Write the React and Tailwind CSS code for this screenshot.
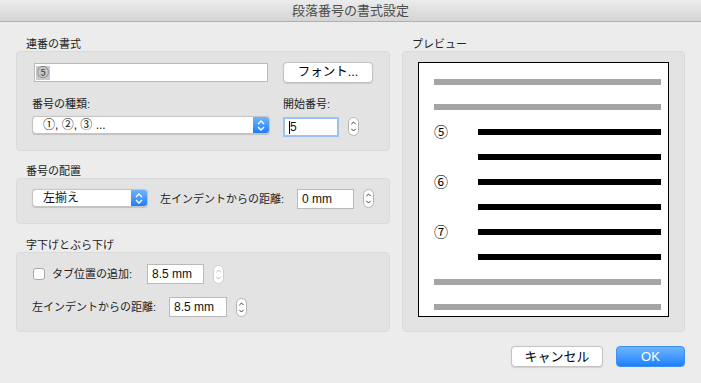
import React from "react";

function Stepper({ disabled }) {
  const c = disabled ? "#b9b9b9" : "#3c3c3c";
  return (
    <svg width="11" height="19" viewBox="0 0 11 19" className="shrink-0">
      <rect x="0.5" y="0.5" width="10" height="18" rx="5" fill="#ffffff" stroke={disabled ? "#cfcfcf" : "#b3b3b3"} />
      <path d="M3.3 7.2 L5.5 5 L7.7 7.2" stroke={c} fill="none" strokeWidth="1" />
      <path d="M3.3 11.8 L5.5 14 L7.7 11.8" stroke={c} fill="none" strokeWidth="1" />
    </svg>
  );
}

function BlueArrows() {
  return (
    <div className="w-[16px] h-full flex items-center justify-center bg-gradient-to-b from-[#6db4fb] to-[#1a7ff7] rounded-r-[3px]">
      <svg width="10" height="13" viewBox="0 0 10 13">
        <path d="M2 5 L5 2 L8 5" stroke="#ffffff" fill="none" strokeWidth="1.4" />
        <path d="M2 8 L5 11 L8 8" stroke="#ffffff" fill="none" strokeWidth="1.4" />
      </svg>
    </div>
  );
}

function Select({ width, height, children }) {
  return (
    <div
      className="flex items-stretch bg-white rounded-[4px] border border-[#c4c4c4] shadow-[0_0.5px_1px_rgba(0,0,0,0.15)] shrink-0"
      style={{ width, height }}
    >
      <div className="flex-1 flex items-center pl-[10px] text-[12px] text-[#111] leading-none">{children}</div>
      <BlueArrows />
    </div>
  );
}

function Field({ width, children, focus }) {
  return (
    <div
      className={
        "h-[20px] bg-white flex items-center pl-[4px] text-[12px] text-[#111] leading-none shrink-0 " +
        (focus ? "border-2 border-[#9dc1f0]" : "border border-[#b9b9b9]")
      }
      style={{ width }}
    >
      {children}
    </div>
  );
}

function Header({ children }) {
  return <div className="h-[14px] pl-[10px] text-[11px] leading-[14px] text-[#222]">{children}</div>;
}

function Line({ gray }) {
  return <div className={"h-[6px] flex-1 " + (gray ? "bg-[#a5a5a5]" : "bg-black")} />;
}

function NumRow({ n }) {
  return (
    <div className="h-[6px] flex items-center">
      <div className="w-[44px] text-[14px] leading-none text-black">{n}</div>
      <Line />
    </div>
  );
}

export default function App() {
  return (
    <div className="w-[701px] h-[383px] bg-[#ececec] flex flex-col font-['Liberation_Sans','Noto_Sans_CJK_JP',sans-serif] text-[#222] overflow-hidden">
      <div className="h-[22px] shrink-0 bg-gradient-to-b from-[#ececec] to-[#d4d4d4] border-b border-[#b0b0b0] flex items-center justify-center text-[13px] text-[#4c4c4c]">
        段落番号の書式設定
      </div>

      <div className="flex px-[16px] pt-[15px] gap-[12px]">
        {/* left column */}
        <div className="w-[374px] flex flex-col">
          <Header>連番の書式</Header>
          <div className="h-[100px] bg-[#e3e3e3] border border-[#dadada] rounded-[4px] pl-[15px] pt-[10px] flex flex-col">
            <div className="flex items-center h-[21px]">
              <div className="ml-[2px] w-[234px] h-[19px] bg-white border border-[#b9b9b9] flex items-center pl-[1px]">
                <span className="bg-[#c9c9c9] text-[12px] leading-[14px] px-[1px] text-[#444]">⑤</span>
              </div>
              <div className="ml-[15px] w-[90px] h-[21px] bg-white border border-[#c3c3c3] rounded-[4px] shadow-[0_0.5px_1px_rgba(0,0,0,0.12)] flex items-center justify-center text-[12.5px] text-black">
                フォント...
              </div>
            </div>
            <div className="flex mt-[14px] h-[14px] text-[11px] leading-[14px]">
              <div className="w-[251px]">番号の種類:</div>
              <div>開始番号:</div>
            </div>
            <div className="flex items-start mt-[5px]">
              <Select width={238} height={18}>①, ②, ③ ...</Select>
              <div className="ml-[13px] mt-[1px]">
                <Field width={56} focus>
                  <span className="w-[1px] h-[13px] bg-black" />
                  <span>5</span>
                </Field>
              </div>
              <div className="ml-[9px] mt-[1px]">
                <Stepper />
              </div>
            </div>
          </div>

          <div className="mt-[13px]">
            <Header>番号の配置</Header>
          </div>
          <div className="h-[46px] bg-[#e3e3e3] border border-[#dadada] rounded-[4px] pl-[15px] pt-[10px] flex items-start">
            <Select width={116} height={18}>左揃え</Select>
            <div className="ml-[12px] w-[137px] h-[20px] flex items-center text-[11px]">左インデントからの距離:</div>
            <Field width={57}>0 mm</Field>
            <div className="ml-[9px]">
              <Stepper />
            </div>
          </div>

          <div className="mt-[14px]">
            <Header>字下げとぶら下げ</Header>
          </div>
          <div className="h-[80px] bg-[#e3e3e3] border border-[#dadada] rounded-[4px] pl-[15px] pt-[11px] flex flex-col">
            <div className="flex items-center h-[20px]">
              <div className="ml-[1px] w-[12px] h-[12px] bg-white border border-[#a9a9a9] rounded-[3px]" />
              <div className="ml-[7px] w-[95px] text-[11px]">タブ位置の追加:</div>
              <Field width={57}>8.5 mm</Field>
              <div className="ml-[9px]">
                <Stepper disabled />
              </div>
            </div>
            <div className="flex items-center h-[20px] mt-[13px]">
              <div className="w-[137px] text-[11px]">左インデントからの距離:</div>
              <Field width={58}>8.5 mm</Field>
              <div className="ml-[9px]">
                <Stepper />
              </div>
            </div>
          </div>
        </div>

        {/* right column */}
        <div className="w-[283px] flex flex-col">
          <Header>プレビュー</Header>
          <div className="h-[281px] bg-[#e3e3e3] border border-[#dadada] rounded-[4px] pl-[15px] pt-[10px]">
            <div className="w-[251px] h-[255px] bg-white border border-black flex flex-col gap-[19px] pt-[16px] pl-[15px] pr-[7px]">
              <div className="h-[6px] flex"><Line gray /></div>
              <div className="h-[6px] flex"><Line gray /></div>
              <NumRow n="⑤" />
              <NumRow n="" />
              <NumRow n="⑥" />
              <NumRow n="" />
              <NumRow n="⑦" />
              <NumRow n="" />
              <div className="h-[6px] flex"><Line gray /></div>
              <div className="h-[6px] flex"><Line gray /></div>
            </div>
          </div>
        </div>
      </div>

      <div className="flex justify-end gap-[13px] pr-[16px] mt-[14px]">
        <div className="w-[92px] h-[21px] bg-white border border-[#c3c3c3] rounded-[4px] shadow-[0_0.5px_1px_rgba(0,0,0,0.12)] flex items-center justify-center text-[13px] text-black">
          キャンセル
        </div>
        <div className="w-[69px] h-[21px] bg-gradient-to-b from-[#6cb5fb] to-[#1580fe] border border-[#3d8ff4] rounded-[4px] flex items-center justify-center text-[13px] text-white font-medium">
          OK
        </div>
      </div>
    </div>
  );
}
